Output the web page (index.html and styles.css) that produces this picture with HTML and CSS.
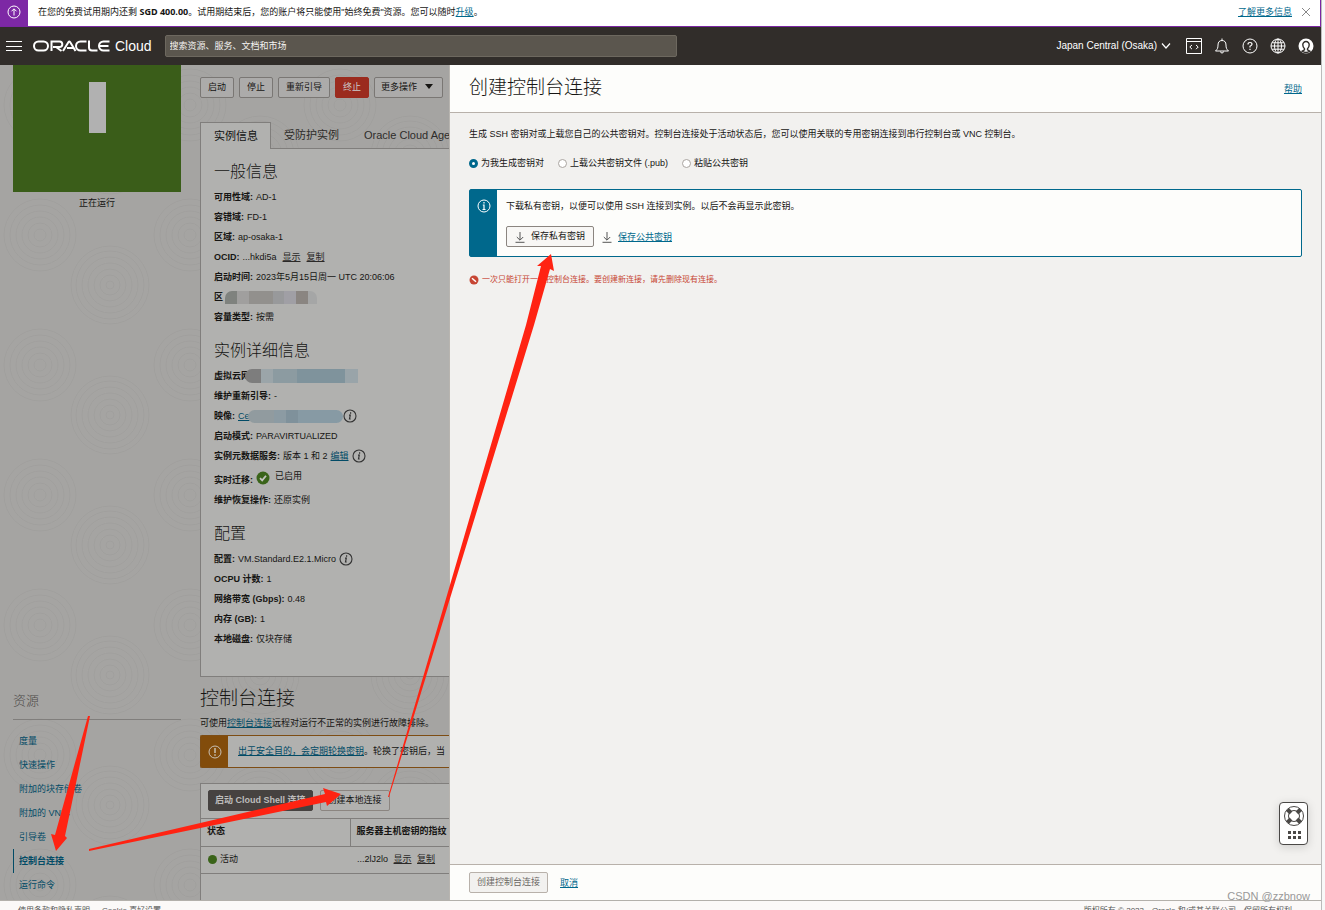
FILE: index.html
```html
<!DOCTYPE html>
<html lang="zh-CN">
<head>
<meta charset="utf-8">
<title>Oracle Cloud - 创建控制台连接</title>
<link rel="stylesheet" href="styles.css">
</head>
<body>
<svg class="sprite" aria-hidden="true">
  <symbol id="i-info" viewBox="0 0 14 14"><circle cx="7" cy="7" r="6" fill="none" stroke="currentColor" stroke-width="1.1"/><path d="M7.6 3.3v1.4M6 6.2h1.3L6.5 10h1.2" fill="none" stroke="currentColor" stroke-width="1.2"/></symbol>
  <symbol id="i-down" viewBox="0 0 10 12"><path d="M5 1v8M1.8 6 5 9.2 8.200 6M.5 11.300h9" fill="none" stroke="currentColor"/></symbol>
</svg>
<div class="app">
  <div class="trial">
    <span class="trial-icon"><svg width="14" height="14" viewBox="0 0 14 14"><circle cx="7" cy="7" r="6" fill="none" stroke="currentColor"/><path d="M7 10.500V4M4.500 6.300 7 3.800l2.500 2.500" fill="none" stroke="currentColor"/></svg></span>
    <p class="trial-text">在您的免费试用期内还剩 <b>SGD 400.00</b>。试用期结束后，您的账户将只能使用"始终免费"资源。您可以随时<a href="#">升级</a>。</p>
    <a class="more" href="#">了解更多信息</a>
    <button class="icon-btn close" aria-label="关闭"><svg width="10" height="10" viewBox="0 0 10 10"><path d="M1 1l8 8M9 1 1 9" stroke="currentColor"/></svg></button>
  </div>
  <header class="top">
    <button class="icon-btn" aria-label="菜单"><svg width="16" height="12" viewBox="0 0 16 12"><path d="M0 1.500h16M0 6.500h16M0 10.500h16" stroke="currentColor"/></svg></button>
    <a class="brand" href="#" aria-label="Oracle Cloud">
      <svg width="77" height="12" viewBox="0 0 77 12" fill="none" stroke="currentColor" stroke-width="2"><rect x="1" y="1.500" width="14" height="9" rx="4.500"/><path d="M18.500 11V1.500h8a2.800 2.800 0 0 1 0 5.600h-6.500M23 7l5.500 4M30 11l5.500-9q.8-1 1.600 0L42.500 11M34 8h6M53.500 1.500h-6a4.500 4.500 0 0 0 0 9h6M56 .5v7q0 3 3 3h5.500M76.500 1.500h-6a4.500 4.500 0 0 0 0 9h6M66.500 6h9"/></svg>
      <span>Cloud</span>
    </a>
    <input class="search" type="text" placeholder="搜索资源、服务、文档和市场" aria-label="搜索">
    <nav class="tools">
      <button class="region">Japan Central (Osaka) <svg width="10" height="8" viewBox="0 0 10 8"><path d="M1 1.500l4 4.500 4-4.500" fill="none" stroke="currentColor" stroke-width="1.200"/></svg></button>
      <button class="icon-btn" aria-label="开发人员工具"><svg width="16" height="16" viewBox="0 0 16 16" fill="none" stroke="currentColor"><path d="M.5.5h15v15H.5zM.5 3.500h15M6 7 3.800 9 6 11.200M10 7l2.200 2L10 11.200"/></svg></button>
      <button class="icon-btn" aria-label="通知"><svg width="16" height="16" viewBox="0 0 16 16" fill="none" stroke="currentColor"><path d="M1.500 13h13c-2-2-2.500-3-2.500-6 0-3-1.500-4.500-4-4.500S4 4 4 7c0 3-.5 4-2.500 6zM6.500 13.500a1.500 1.500 0 0 0 3 0M8 2.500V.5"/></svg></button>
      <button class="icon-btn" aria-label="帮助"><svg width="16" height="16" viewBox="0 0 16 16" fill="none" stroke="currentColor"><circle cx="8" cy="8" r="7"/><path d="M6 6.500Q6 4.500 8 4.500t2 1.800Q10 7.300 8 8.300v1.200M8 10.800v1.200" stroke-width="1.200"/></svg></button>
      <button class="icon-btn" aria-label="语言"><svg width="16" height="16" viewBox="0 0 16 16" fill="none" stroke="currentColor"><circle cx="8" cy="8" r="7"/><ellipse cx="8" cy="8" rx="3.500" ry="7"/><path d="M1 8h14M8 1v14M2 4.800h12M2 11.200h12"/></svg></button>
      <button class="icon-btn" aria-label="概要信息"><svg width="16" height="16" viewBox="0 0 16 16"><circle cx="8" cy="8" r="7.500" fill="currentColor"/><path d="M8 3.500a3.200 3.200 0 0 0-3.200 3.300c0 1.800.7 3 1.700 3.900v1.100L4 13.200q4 2.600 8 0l-2.500-1.400v-1.100c1-.9 1.700-2.100 1.700-3.900A3.200 3.200 0 0 0 8 3.500z" fill="none" stroke="#312d2a" stroke-width="1.400"/></svg></button>
    </nav>
  </header>

  <main class="main">
    <div class="page">
      <svg class="texture" aria-hidden="true"><defs><pattern id="rings" width="150" height="130" patternUnits="userSpaceOnUse"><g fill="none" stroke="#a09f9d"><circle cx="40" cy="40" r="6"/><circle cx="40" cy="40" r="12"/><circle cx="40" cy="40" r="18"/><circle cx="40" cy="40" r="24"/><circle cx="40" cy="40" r="30"/><circle cx="40" cy="40" r="36"/><circle cx="110" cy="90" r="4"/><circle cx="110" cy="90" r="10"/><circle cx="110" cy="90" r="16"/><circle cx="110" cy="90" r="22"/><circle cx="110" cy="90" r="28"/><circle cx="110" cy="90" r="34"/><circle cx="110" cy="90" r="39"/></g></pattern></defs><rect width="100%" height="100%" fill="url(#rings)"/></svg>
      <aside class="side">
        <div class="tile"><i></i></div>
        <p class="status">正在运行</p>
        <h3>资源</h3>
        <ul>
          <li><a href="#">度量</a></li>
          <li><a href="#">快速操作</a></li>
          <li><a href="#">附加的块存储卷</a></li>
          <li><a href="#">附加的 VNIC</a></li>
          <li><a href="#">引导卷</a></li>
          <li class="current"><a href="#">控制台连接</a></li>
          <li><a href="#">运行命令</a></li>
        </ul>
      </aside>
      <section class="content">
        <div class="actions">
          <button class="btn">启动</button>
          <button class="btn">停止</button>
          <button class="btn">重新引导</button>
          <button class="btn danger">终止</button>
          <button class="btn menu">更多操作 <svg width="8" height="5" viewBox="0 0 8 5"><path d="M0 0h8L4 5z" fill="currentColor"/></svg></button>
        </div>
        <div class="tabs">
          <button class="tab selected">实例信息</button>
          <button class="tab">受防护实例</button>
          <button class="tab">Oracle Cloud Agent</button>
        </div>
        <div class="card">
          <h2>一般信息</h2>
          <p><b>可用性域:</b> AD-1</p>
          <p><b>容错域:</b> FD-1</p>
          <p><b>区域:</b> ap-osaka-1</p>
          <p><b>OCID:</b> ...hkdi5a <a class="act" href="#">显示</a> <a class="act" href="#">复制</a></p>
          <p><b>启动时间:</b> 2023年5月15日周一 UTC 20:06:06</p>
          <p><b>区</b><span class="mask m1"></span></p>
          <p><b>容量类型:</b> 按需</p>
          <h2>实例详细信息</h2>
          <p><b>虚拟云网</b><span class="mask m2"></span></p>
          <p><b>维护重新引导:</b> -</p>
          <p><b>映像:</b> <a href="#">Ce</a><span class="mask m3"></span><svg class="info"><use href="#i-info"/></svg></p>
          <p><b>启动模式:</b> PARAVIRTUALIZED</p>
          <p><b>实例元数据服务:</b> 版本 1 和 2 <a href="#">编辑</a> <svg class="info"><use href="#i-info"/></svg></p>
          <p class="live"><b>实时迁移:</b> <svg class="ok" viewBox="0 0 14 14"><circle cx="7" cy="7" r="6.500" fill="#3a6419"/><path d="M4 7.200l2.200 2.200L10 4.800" fill="none" stroke="#c4c4c0" stroke-width="1.800"/></svg> <span>已启用</span></p>
          <p><b>维护恢复操作:</b> 还原实例</p>
          <h2>配置</h2>
          <p><b>配置:</b> VM.Standard.E2.1.Micro <svg class="info"><use href="#i-info"/></svg></p>
          <p><b>OCPU 计数:</b> 1</p>
          <p><b>网络带宽 (Gbps):</b> 0.48</p>
          <p><b>内存 (GB):</b> 1</p>
          <p><b>本地磁盘:</b> 仅块存储</p>
        </div>
        <h1>控制台连接</h1>
        <p class="desc">可使用<a href="#">控制台连接</a>远程对运行不正常的实例进行故障排除。</p>
        <div class="warn">
          <span class="warn-icon"><svg width="14" height="14" viewBox="0 0 14 14"><circle cx="7" cy="7" r="6" fill="none" stroke="currentColor"/><path d="M7 3v5M7 9.300v1.500" stroke="currentColor" stroke-width="1.500"/></svg></span>
          <p><a href="#">出于安全目的，会定期轮换密钥</a>。轮换了密钥后，当</p>
        </div>
        <div class="conn">
          <div class="conn-bar"><button class="btn dark">启动 Cloud Shell 连接</button><button class="btn">创建本地连接</button></div>
          <table>
            <thead><tr><th>状态</th><th>服务器主机密钥的指纹</th></tr></thead>
            <tbody><tr><td><i class="dot"></i>活动</td><td>...2lJ2lo <a class="act" href="#">显示</a> <a class="act" href="#">复制</a></td></tr></tbody>
          </table>
        </div>
      </section>
    </div>

    <section class="drawer">
      <div class="drawer-head"><h1>创建控制台连接</h1><a href="#">帮助</a></div>
      <div class="drawer-body">
        <p>生成 SSH 密钥对或上载您自己的公共密钥对。控制台连接处于活动状态后，您可以使用关联的专用密钥连接到串行控制台或 VNC 控制台。</p>
        <div class="radios">
          <label><input type="radio" name="key" checked>为我生成密钥对</label>
          <label><input type="radio" name="key">上载公共密钥文件 (.pub)</label>
          <label><input type="radio" name="key">粘贴公共密钥</label>
        </div>
        <div class="notice">
          <span class="notice-icon"><svg width="14" height="14" viewBox="0 0 14 14"><circle cx="7" cy="7" r="6" fill="none" stroke="currentColor"/><path d="M7 3v1.500M5.800 6H7v4.500M5.500 10.500h3" fill="none" stroke="currentColor" stroke-width="1.200"/></svg></span>
          <div class="notice-body">
            <p>下载私有密钥，以便可以使用 SSH 连接到实例。以后不会再显示此密钥。</p>
            <div class="saves">
              <button class="btn save"><svg class="down"><use href="#i-down"/></svg>保存私有密钥</button>
              <svg class="down"><use href="#i-down"/></svg><a href="#">保存公共密钥</a>
            </div>
          </div>
        </div>
        <p class="error"><svg width="10" height="10" viewBox="0 0 10 10"><circle cx="5" cy="5" r="4.500" fill="#c74634"/><path d="M3 3.300l4 3.400" stroke="#fff" stroke-width="1.500"/></svg>一次只能打开一个控制台连接。要创建新连接，请先删除现有连接。</p>
        <button class="support" aria-label="支持"><svg width="22" height="34" viewBox="0 0 22 34" fill="none" stroke="#4a4846"><circle cx="11" cy="11" r="9.500"/><circle cx="11" cy="11" r="5.500"/><path d="M4.500 4.500l3.500 3.500M17.500 4.500l-3.500 3.500M4.500 17.500 8 14M17.500 17.500 14 14" stroke-width="4"/><path d="M5 27.500h3M10 27.500h3M15 27.500h3M5 32.500h3M10 32.500h3M15 32.500h3" stroke-width="3"/></svg></button>
      </div>
      <div class="drawer-foot"><button class="btn muted">创建控制台连接</button><a href="#">取消</a></div>
    </section>
  </main>
  <footer class="foot"><span>使用条款和隐私声明</span><span>Cookie 喜好设置</span><span class="copy">版权所有 © 2023，Oracle 和/或其关联公司。保留所有权利。</span></footer>
</div>
<svg class="arrows" width="600" height="900" viewBox="0 0 600 900" fill="#ff2312" aria-hidden="true">
  <path d="M88 716h2L65 836l2 2L56 851 51 834l4 1z"/>
  <path d="M89 849l236-55-2-6 18 6-14 12-1-4L89 851z"/>
  <path d="M388 797 526 325l15-59-4 0 14-12 3 17-4-2-16 56L389 797z"/>
</svg>
<div class="watermark">CSDN @zzbnow</div>
</body>
</html>
```
FILE: styles.css
```css
* { box-sizing: border-box; }
body { margin: 0; background: #f8f8f8; font: 9px/20px "Liberation Sans", "Noto Sans CJK SC", sans-serif; color: #161513; }
h1, h2, h3, p, ul { margin: 0; padding: 0; }
h1, h2, h3 { font-weight: 300; }
ul { list-style: none; }
a { color: #00688c; }
button, input { font: inherit; color: inherit; margin: 0; }
.sprite { position: absolute; width: 0; height: 0; }
.app { display: flex; flex-direction: column; height: 100vh; margin-right: 3px; border-right: 1px solid #bbb; overflow: hidden; }
.icon-btn { border: 0; background: none; padding: 0; display: flex; }

.trial { flex: none; display: flex; align-items: center; height: 27px; background: #fff; border-bottom: 1px solid #7b26a3; border-right: 1px solid #7b26a3; padding-right: 9px; }
.trial-icon { width: 28px; align-self: stretch; background: #7d28a5; color: #fff; display: flex; align-items: center; justify-content: center; padding-bottom: 2px; }
.trial-text { flex: 1; padding: 0 0 2px 10px; }
.trial-text b { font-family: "Noto Sans", sans-serif; }
.more { padding-bottom: 2px; }
.close { margin-left: 9px; color: #888; padding-bottom: 2px; }

.top { flex: none; display: flex; align-items: center; height: 38px; background: #312d2a; color: #fff; padding: 0 7px 0 6px; }
.brand { display: flex; align-items: center; gap: 5px; margin: 0 13px 0 11px; color: #fff; text-decoration: none; font-size: 14px; }
.search { flex: 0 1 512px; height: 22px; border: 1px solid #6d685f; border-radius: 2px; background: #5b564e; color: #fff; padding: 0 4px; }
.search::placeholder { color: #f5f4f2; opacity: 1; }
.tools { margin-left: auto; display: flex; align-items: center; gap: 12px; }
.region { border: 0; background: none; padding: 0; display: flex; align-items: center; gap: 4px; font-size: 10px; margin-right: 3px; }

.main { flex: 1; min-height: 0; display: flex; border-bottom: 1px solid #b3b0ab; }
.page { position: relative; flex: 0 0 450px; display: flex; overflow: hidden; background: #a5a4a2; border-right: 1px solid #b8b5b0; }
.page a { color: #024b66; }
.texture { position: absolute; inset: 0; width: 100%; height: 100%; }
.side { position: relative; flex: 0 0 200px; padding: 0 19px 0 13px; }
.tile { height: 127px; background: #3a5d19; display: flex; justify-content: center; padding-top: 17px; }
.tile i { width: 17px; height: 51px; background: #b1b1b1; }
.status { text-align: center; padding-top: 1px; }
.side h3 { font-size: 13px; color: #4d4b49; margin-top: 478px; padding-bottom: 8px; border-bottom: 1px solid #807e7c; }
.side ul { padding-top: 9px; }
.side li { padding-left: 6px; line-height: 24px; }
.side li a { text-decoration: none; }
.side .current { border-left: 1px solid #024b66; padding-left: 5px; font-weight: 700; }
.content { position: relative; flex: 1; min-width: 0; display: flex; flex-direction: column; }

.btn { flex: none; height: 21px; line-height: 19px; padding: 0 7px; border: 1px solid #8b8580; border-radius: 2px; background: none; white-space: nowrap; }
.actions { display: flex; gap: 5px; padding-top: 12px; }
.actions .btn { border-color: #7a7774; background: #acabaa; }
.actions .danger { background: #9b2b1e; border-color: #9b2b1e; color: #ccc; }
.actions .menu { padding: 0 6px; }
.menu svg { margin: 0 3px 1px 5px; }
.tabs { display: flex; margin-top: 24px; border-bottom: 1px solid #807e7c; }
.tab { flex: none; height: 26px; border: 0; background: none; padding: 0 12px 0 13px; font-size: 11px; white-space: nowrap; color: #2e2c2a; }
.tab.selected { border: 1px solid #807e7c; border-bottom: 0; background: #b1b1af; color: #111; margin-bottom: -1px; height: 27px; }
.card { background: #b1b1af; border: 1px solid #807e7c; border-top: 0; border-right: 0; padding: 11px 0 27px 13px; }
.card h2 { font-size: 16px; line-height: 24px; height: 27px; }
.card p + h2 { margin-top: 12px; }
.card p { height: 20px; white-space: nowrap; display: flex; align-items: center; gap: 3px; }
.card p.live { height: 24px; }
.live b { padding-top: 4px; }
.live span { padding: 0 0 4px 2px; }
.page .act { color: #2b2928; margin-left: 3px; }
.info { width: 14px; height: 14px; color: #333; }
.ok { width: 14px; height: 14px; }
.mask { height: 13px; border-radius: 7px; }
.m1 { width: 92px; margin-left: -1px; border-radius: 7px 7px 0 0; background: linear-gradient(90deg, #7f827e 0 12px, #a09f9e 12px 24px, #92908d 24px 48px, #98999b 48px 59px, #a09fa5 59px 71px, #8a8581 71px 83px, #a5a6a6 83px); }
.m2 { width: 113px; margin-left: -8px; height: 14px; border-radius: 7px 0 0 7px; background: linear-gradient(90deg, #7d7d7d 0 16px, #9ba5a9 16px 28px, #8c9ba1 28px 52px, #7f939c 52px 100px, #99a4a9 100px); }
.m3 { width: 95px; margin-left: -5px; margin-right: -3px; background: linear-gradient(90deg, #919b9f 0 26px, #8c9ba3 26px 38px, #7f919b 38px 50px, #879aa4 50px); }
.content > h1 { font-size: 19px; line-height: 28px; margin-top: 8px; }
.desc { white-space: nowrap; }
.warn { flex: none; display: flex; margin-top: 2px; height: 33px; border: 1px solid #7e4d14; border-right: 0; border-radius: 2px 0 0 2px; background: #b1b1af; }
.warn-icon { flex: 0 0 27px; background: #824c0b; color: #c9c0b4; display: flex; align-items: center; justify-content: center; }
.warn p { padding-left: 10px; line-height: 31px; white-space: nowrap; }
.conn { flex: 1; margin-top: 15px; border: 1px solid #807e7c; border-width: 1px 0 0 1px; background: #b1b1af; }
.conn-bar { display: flex; gap: 7px; padding: 6px 7px 7px; }
.conn-bar .dark { background: #464240; border-color: #464240; color: #bdbcbb; font-weight: 700; padding: 0 6px; }
table { border-collapse: collapse; table-layout: fixed; width: 100%; white-space: nowrap; }
th, td { text-align: left; padding: 1px 7px 4px; border: 0 solid #807e7c; border-width: 1px 0; }
th:first-child { width: 149px; border-right-width: 1px; }
th { height: 28px; padding-left: 6px; }
td { height: 27px; }
.dot { display: inline-block; width: 9px; height: 9px; border-radius: 50%; background: #3a6419; margin-right: 3px; vertical-align: -2px; }

.drawer { flex: 1; min-width: 0; display: flex; flex-direction: column; background: #f2f1ef; }
.drawer-head { flex: none; height: 48px; background: #fdfdfb; border-bottom: 1px solid #b8b1aa; display: flex; align-items: center; justify-content: space-between; padding: 0 19px; }
.drawer-head h1 { font-size: 19px; line-height: 28px; padding-bottom: 2px; }
.drawer-body { position: relative; flex: 1; padding: 11px 19px; }
.radios { display: flex; gap: 14px; margin-top: 9px; }
.radios label { display: flex; align-items: center; gap: 3px; }
.radios input { appearance: none; width: 9px; height: 9px; border: 1px solid #aaa5a0; border-radius: 50%; background: #fff; }
.radios input:checked { border: 3px solid #00688c; }
.notice { display: flex; margin-top: 16px; min-height: 68px; border: 1px solid #00688c; border-radius: 2px; background: #fdfdfb; }
.notice-icon { flex: 0 0 27px; background: #00688c; color: #fff; display: flex; justify-content: center; padding-top: 9px; }
.notice-body { padding: 6px 9px; }
.saves { display: flex; align-items: center; margin-top: 10px; }
.down { width: 10px; height: 12px; color: #555; margin-right: 6px; }
.save { display: flex; align-items: center; margin-right: 8px; background: #f8f7f5; padding: 0 8px; }
.error { display: flex; align-items: center; gap: 3px; margin-top: 13px; font-size: 8px; color: #c74634; }
.support { position: absolute; right: 13px; bottom: 19px; width: 29px; height: 43px; padding: 2px 0 0; border: 1px solid #4a4846; border-radius: 4px; background: #fff; display: flex; align-items: flex-start; justify-content: center; box-shadow: 0 2px 10px rgba(0, 0, 0, .15); }
.drawer-foot { flex: none; height: 36px; background: #fdfdfb; border-top: 1px solid #b8b1aa; display: flex; align-items: center; gap: 12px; padding: 0 19px; }
.muted { background: #f2f1ef; border-color: #b8b1aa; color: #6b6865; }

.foot { flex: none; height: 9px; overflow: hidden; background: #fbf9f8; display: flex; gap: 12px; padding: 0 21px 0 18px; font-size: 8px; color: #555; }
.copy { margin-left: auto; }
.arrows { position: absolute; left: 0; top: 0; pointer-events: none; }
.watermark { position: absolute; right: 15px; bottom: 4px; font-size: 11px; line-height: 20px; color: #999; }
```
